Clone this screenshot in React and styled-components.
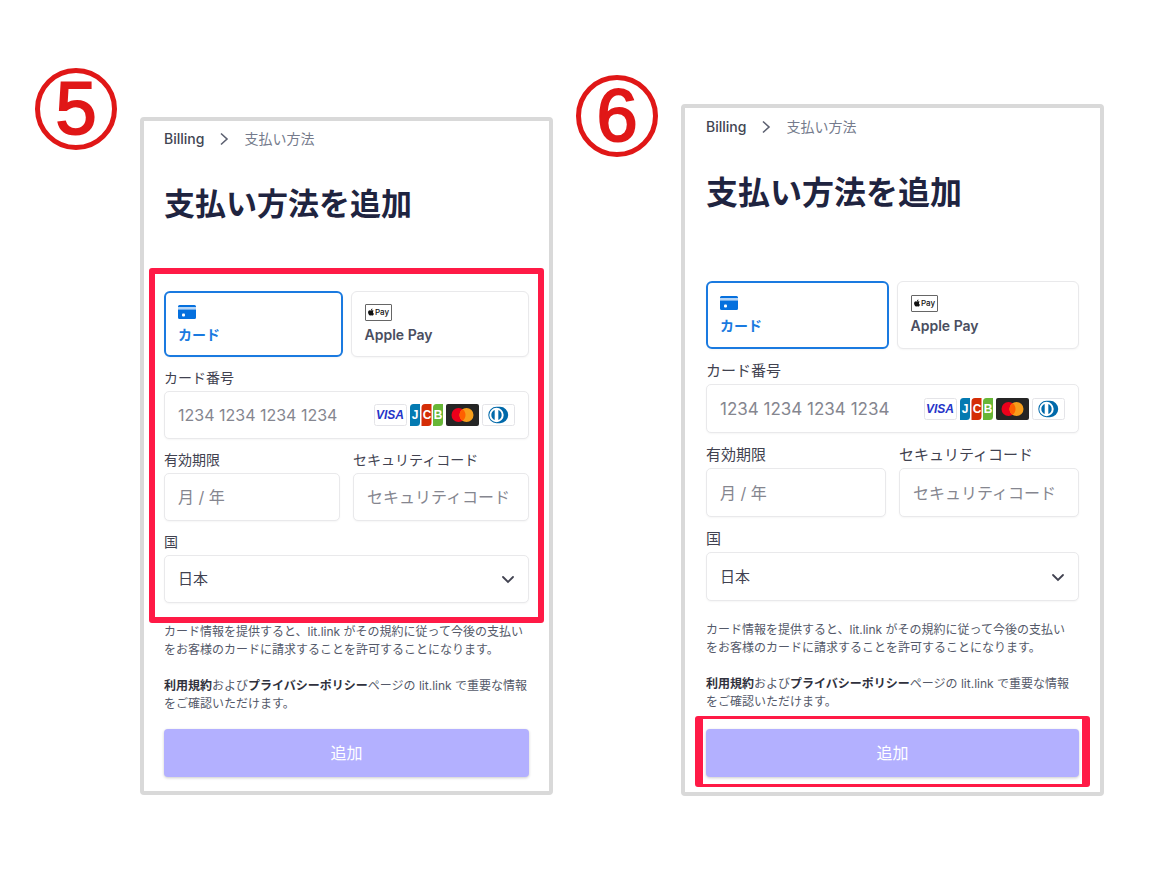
import React, { useId, useState } from 'react';
import styled, { createGlobalStyle, css, ThemeProvider } from 'styled-components';
import { FaApple } from 'react-icons/fa';

const GlobalStyle = createGlobalStyle`
  * {
    box-sizing: border-box;
  }

  body {
    margin: 0;
    background: #fff;
    color: #414250;
    font-family: Inter, 'Noto Sans CJK JP', sans-serif;
  }

  button, input, select {
    font-family: inherit;
  }
`;

const compact = {
  top: 117,
  padding: '8px 20px 14px',
  titleSize: 31,
  titleMargin: '35px 0 67px',
  tabHeight: 66,
  labelSize: 14,
  numberSize: 16,
  fieldGap: 12,
  fieldHeight: 48,
  submitGap: 16,
};

const regular = {
  top: 104,
  padding: '9px 21px 15px',
  titleSize: 32,
  titleMargin: '36px 0 68px',
  tabHeight: 68,
  labelSize: 15,
  numberSize: 17,
  fieldGap: 13,
  fieldHeight: 49,
  submitGap: 18,
};

const Page = styled.main`
  display: grid;
  grid-template-columns: 82px minmax(0, 413fr) 82px minmax(0, 423fr);
  column-gap: 23px;
  align-items: start;
  padding: 0 66px 80px 35px;
`;

const StepNumber = styled.div`
  display: flex;
  align-items: center;
  justify-content: center;
  height: 82px;
  margin-top: ${({ $top }) => $top}px;
  border: 5px solid #e01717;
  border-radius: 50%;
  color: #e01717;
  font-family: 'Liberation Sans', Arial, sans-serif;
  font-size: 74px;
  line-height: 74px;
  -webkit-text-stroke: 2px #e01717;
`;

const Panel = styled.section`
  margin-top: ${({ theme }) => theme.top}px;
  padding: ${({ theme }) => theme.padding};
  border: 4px solid #d9d9d9;
  border-radius: 4px;
  background: #fff;
`;

const Breadcrumb = styled.nav`
  display: flex;
  align-items: center;
  gap: 15px;
  font-size: 14px;
  line-height: 20px;
  color: #757b8c;

  a {
    color: #414552;
    font-weight: 500;
    text-decoration: none;
  }
`;

const Title = styled.h1`
  margin: ${({ theme }) => theme.titleMargin};
  color: #1f2440;
  font-size: ${({ theme }) => theme.titleSize}px;
  font-weight: 700;
  line-height: 40px;
  white-space: nowrap;
`;

const Highlighted = styled.div`
  position: relative;
`;

const Frame = styled.div`
  position: absolute;
  border-style: solid;
  border-color: #ff1a46;
  border-radius: 3px;
  pointer-events: none;
  ${({ $around }) =>
    $around === 'form'
      ? css`
          inset: -23px -15px -20px;
          border-width: 6px;
        `
      : css`
          inset: -13px -11px -10px;
          border-width: 3px 8px;
        `}
`;

const Tabs = styled.div`
  display: grid;
  grid-template-columns: 1fr 1fr;
  gap: 8px;
`;

const Tab = styled.button`
  display: flex;
  flex-direction: column;
  align-items: flex-start;
  justify-content: center;
  gap: 4px;
  height: ${({ theme }) => theme.tabHeight}px;
  padding: 0 ${({ $active }) => ($active ? 12 : 13)}px;
  border: ${({ $active }) => ($active ? '2px solid #1a7ae0' : '1px solid #e9e9eb')};
  border-radius: 6px;
  background: #fff;
  box-shadow: 0 1px 2px rgba(0, 0, 0, 0.04);
  color: ${({ $active }) => ($active ? '#1a7ae0' : '#4a4e60')};
  font-size: 14px;
  font-weight: 600;
  line-height: 20px;
  cursor: pointer;
`;

const TabIcon = styled.span`
  display: flex;
  align-items: center;
  height: 18px;
`;

const ApplePayMark = styled.span`
  display: flex;
  align-items: center;
  justify-content: center;
  width: 27px;
  height: 17px;
  border: 1px solid #666;
  border-radius: 1px;
  color: #111;
  font-size: 8px;
  font-weight: 500;
  line-height: 8px;
`;

const FieldGroup = styled.div`
  min-width: 0;
  margin-top: ${({ theme }) => theme.fieldGap}px;
`;

const FieldRow = styled.div`
  display: grid;
  grid-template-columns: 1fr 1fr;
  gap: 13px;
`;

const Label = styled.label`
  display: block;
  margin-bottom: 4px;
  font-size: ${({ theme }) => theme.labelSize}px;
  line-height: 18px;
`;

const FieldBox = styled.div`
  display: flex;
  align-items: center;
  height: ${({ theme }) => theme.fieldHeight}px;
  padding: 0 13px;
  border: 1px solid #e9e9eb;
  border-radius: 5px;
  background: #fff;
  box-shadow: 0 1px 2px rgba(0, 0, 0, 0.04);
`;

const Input = styled.input`
  flex: 1;
  min-width: 0;
  padding: 0;
  border: 0;
  outline: 0;
  background: none;
  color: #30313d;
  font-size: ${({ $numeric, theme }) => ($numeric ? theme.numberSize : 16)}px;
  line-height: 24px;

  &::placeholder {
    color: #85868f;
    opacity: 1;
  }
`;

const Select = styled.select`
  flex: 1;
  min-width: 0;
  padding: 0;
  border: 0;
  outline: 0;
  appearance: none;
  background: none;
  color: #414250;
  font-size: 15px;
  line-height: 24px;
`;

const Brands = styled.div`
  display: flex;
  gap: 3px;

  svg {
    display: block;
    width: 33px;
    height: 22px;
  }
`;

const Legal = styled.div`
  margin-top: 20px;
  color: #545969;
  font-size: 12px;
  line-height: 18px;

  p {
    margin: 0 0 18px;
    white-space: nowrap;
  }

  p:last-child {
    margin-bottom: 0;
  }

  a {
    color: #30313d;
    font-weight: 600;
    text-decoration: none;
  }
`;

const Submit = styled.button`
  display: block;
  width: 100%;
  height: 48px;
  border: 0;
  border-radius: 4px;
  background: #b3b0ff;
  box-shadow: 0 1px 3px rgba(0, 0, 0, 0.2);
  color: #fff;
  font-size: 16px;
  line-height: 24px;
  cursor: pointer;
`;

const SubmitArea = styled(Highlighted)`
  margin-top: ${({ theme }) => theme.submitGap}px;
`;

const ChevronRight = () => (
  <svg width="10" height="14" viewBox="0 0 10 14" fill="none" stroke="#5c6070" strokeWidth="1.6" aria-hidden="true">
    <path d="M2 1.5 8 7l-6 5.5" />
  </svg>
);

const ChevronDown = () => (
  <svg width="14" height="10" viewBox="0 0 14 10" fill="none" stroke="#414250" strokeWidth="1.8" strokeLinecap="round" aria-hidden="true">
    <path d="m2 3 5 5 5-5" />
  </svg>
);

const CardIcon = () => (
  <svg width="18" height="14" viewBox="0 0 18 14" aria-hidden="true">
    <path d="M1.5 0h15A1.5 1.5 0 0 1 18 1.5V2H0v-.5A1.5 1.5 0 0 1 1.5 0Z" fill="#0570de" />
    <path d="M0 2h18v2.5H0Z" fill="#b8d6f6" />
    <path d="M0 4.5h18v8a1.5 1.5 0 0 1-1.5 1.5h-15A1.5 1.5 0 0 1 0 12.5Z" fill="#0570de" />
    <rect x="4" y="8.5" width="3" height="3" rx="1" fill="#fff" />
  </svg>
);

const Visa = () => (
  <svg viewBox="0 0 33 22" role="img" aria-label="Visa">
    <rect x=".5" y=".5" width="32" height="21" rx="2" fill="#fff" stroke="#e4e4e8" />
    <text x="16" y="15" textAnchor="middle" fontFamily="Liberation Sans, sans-serif" fontSize="12" fontWeight="700" fontStyle="italic" fill="#2534c8">VISA</text>
  </svg>
);

const Jcb = () => (
  <svg viewBox="0 0 33 22" role="img" aria-label="JCB">
    <path d="M3.5 0H10v18.5A3.5 3.5 0 0 1 6.5 22H0V3.5A3.5 3.5 0 0 1 3.5 0Z" fill="#047ab1" />
    <path d="M15 0h6.5v18.5A3.5 3.5 0 0 1 18 22h-6.5V3.5A3.5 3.5 0 0 1 15 0Z" fill="#d42d06" />
    <path d="M26.5 0H33v18.5a3.5 3.5 0 0 1-3.5 3.5H23V3.5A3.5 3.5 0 0 1 26.5 0Z" fill="#67b637" />
    <g fill="#fff" fontFamily="Liberation Sans, sans-serif" fontSize="12" fontWeight="700" textAnchor="middle">
      <text x="5" y="15">J</text>
      <text x="17" y="15">C</text>
      <text x="28" y="15">B</text>
    </g>
  </svg>
);

const Mastercard = () => (
  <svg viewBox="0 0 33 22" role="img" aria-label="Mastercard">
    <rect width="33" height="22" rx="2" fill="#252525" />
    <circle cx="12.5" cy="11" r="7" fill="#eb001b" />
    <circle cx="20.5" cy="11" r="7" fill="#f79e1b" />
    <path d="M16.5 5.26a7 7 0 0 1 0 11.48a7 7 0 0 1 0-11.48Z" fill="#ff5f00" />
  </svg>
);

const Diners = () => (
  <svg viewBox="0 0 33 22" role="img" aria-label="Diners Club">
    <rect x=".5" y=".5" width="32" height="21" rx="2" fill="#fff" stroke="#e4e4e8" />
    <path d="M14.5 2.8H18a8.2 8.2 0 0 1 0 16.4h-3.5a8.2 8.2 0 0 1 0-16.4Z" fill="#0069aa" />
    <circle cx="14.5" cy="11" r="7.2" fill="#fff" />
    <path d="M12.7 6a5.4 5.4 0 0 0 0 10Z" fill="#0069aa" />
    <path d="M16.3 6a5.4 5.4 0 0 1 0 10Z" fill="#0069aa" />
  </svg>
);

const Field = ({ label, placeholder, numeric, children }) => {
  const id = useId();

  return (
    <FieldGroup>
      <Label htmlFor={id}>{label}</Label>
      <FieldBox>
        <Input id={id} placeholder={placeholder} $numeric={numeric} />
        {children}
      </FieldBox>
    </FieldGroup>
  );
};

const BillingPanel = ({ size, highlight }) => {
  const [method, setMethod] = useState('card');
  const countryId = useId();

  return (
    <ThemeProvider theme={size}>
      <Panel>
        <Breadcrumb>
          <a href="#billing">Billing</a>
          <ChevronRight />
          <span>支払い方法</span>
        </Breadcrumb>
        <Title>支払い方法を追加</Title>

        <Highlighted>
          <Tabs>
            <Tab type="button" $active={method === 'card'} onClick={() => setMethod('card')}>
              <TabIcon><CardIcon /></TabIcon>
              カード
            </Tab>
            <Tab type="button" $active={method === 'apple'} onClick={() => setMethod('apple')}>
              <TabIcon>
                <ApplePayMark><FaApple size={8} />Pay</ApplePayMark>
              </TabIcon>
              Apple Pay
            </Tab>
          </Tabs>
          <Field label="カード番号" placeholder="1234 1234 1234 1234" numeric>
            <Brands>
              <Visa />
              <Jcb />
              <Mastercard />
              <Diners />
            </Brands>
          </Field>
          <FieldRow>
            <Field label="有効期限" placeholder="月 / 年" />
            <Field label="セキュリティコード" placeholder="セキュリティコード" />
          </FieldRow>
          <FieldGroup>
            <Label htmlFor={countryId}>国</Label>
            <FieldBox>
              <Select id={countryId}>
                <option>日本</option>
              </Select>
              <ChevronDown />
            </FieldBox>
          </FieldGroup>
          {highlight === 'form' && <Frame $around="form" />}
        </Highlighted>

        <Legal>
          <p>
            カード情報を提供すると、lit.link がその規約に従って今後の支払い
            <br />
            をお客様のカードに請求することを許可することになります。
          </p>
          <p>
            <a href="#terms">利用規約</a>および<a href="#privacy">プライバシーポリシー</a>ページの lit.link で重要な情報
            <br />
            をご確認いただけます。
          </p>
        </Legal>

        <SubmitArea>
          <Submit type="button">追加</Submit>
          {highlight === 'submit' && <Frame $around="submit" />}
        </SubmitArea>
      </Panel>
    </ThemeProvider>
  );
};

const App = () => (
  <>
    <GlobalStyle />
    <Page lang="ja">
      <StepNumber $top={68}>5</StepNumber>
      <BillingPanel size={compact} highlight="form" />
      <StepNumber $top={75}>6</StepNumber>
      <BillingPanel size={regular} highlight="submit" />
    </Page>
  </>
);

export default App;
